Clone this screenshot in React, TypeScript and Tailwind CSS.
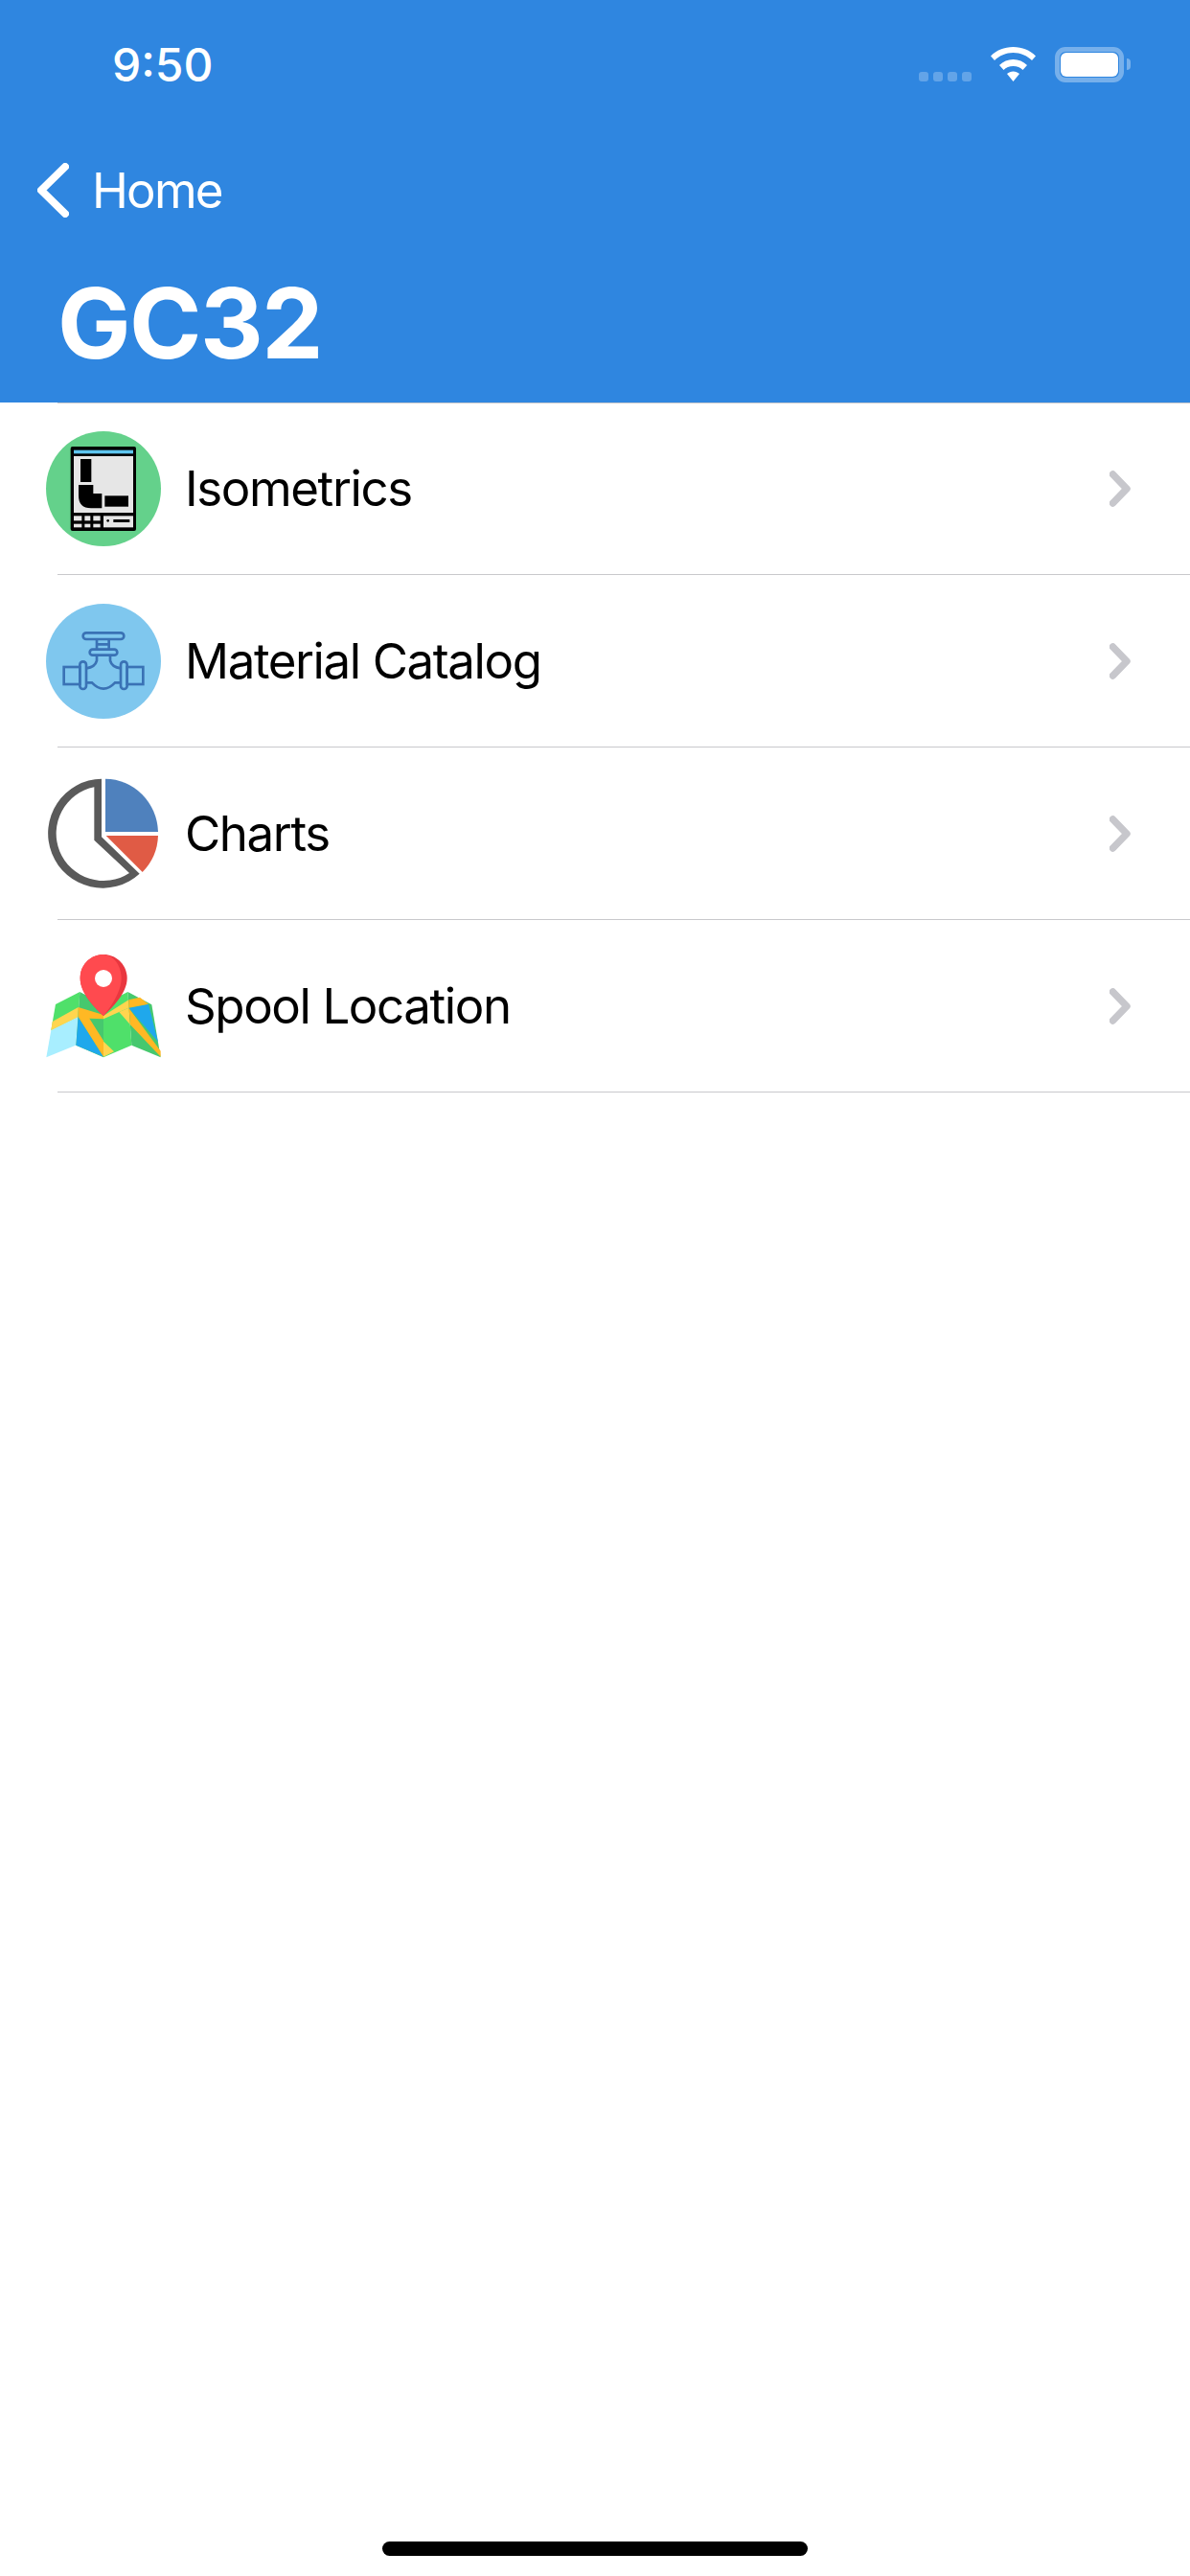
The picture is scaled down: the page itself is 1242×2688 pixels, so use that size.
import React from "react";

const font = "[font-family:Inter,'Liberation_Sans',sans-serif]";

function IsoIcon() {
  return (
    <svg width={130} height={130} viewBox="39 45 390 390">
      <circle cx={234} cy={240} r={180} fill="#64d18b" />
      <rect x={131} y={108} width={205} height={264} rx={6} fill="#000" />
      <rect x={141} y={119} width={186} height={11} fill="#5ec5ef" />
      <rect x={141} y={138} width={186} height={177} fill="#e6e6e6" />
      <rect x={162} y={147} width={34} height={72} fill="#000" />
      <path d="M156 228H202V255H229V301H195Q156 301 156 262Z" fill="#000" />
      <rect x={238} y={262} width={74} height={34} fill="#000" />
      <rect x={141} y={325} width={25} height={15} fill="#e6e6e6" />
      <rect x={175} y={325} width={18} height={15} fill="#e6e6e6" />
      <rect x={202} y={325} width={22} height={15} fill="#e6e6e6" />
      <rect x={141} y={350} width={25} height={11} fill="#e6e6e6" />
      <rect x={175} y={350} width={18} height={11} fill="#e6e6e6" />
      <rect x={202} y={350} width={22} height={11} fill="#e6e6e6" />
      <rect x={234} y={325} width={93} height={36} fill="#e6e6e6" />
      <circle cx={248} cy={340} r={4} fill="#000" />
      <rect x={265} y={336} width={51} height={9} fill="#000" />
    </svg>
  );
}

function ValveIcon() {
  return (
    <svg width={130} height={130} viewBox="39 45 390 390">
      <circle cx={234} cy={240} r={180} fill="#7fc7ee" />
      <g fill="none" stroke="#3a72b5" strokeWidth={8}>
        <rect x={170} y={151} width={128} height={20} rx={10} />
        <rect x={191} y={203} width={86} height={18} rx={9} />
        <path d="M213 171V203M251 171V203M213 187H251" />
        <rect x={110} y={258} width={50} height={54} />
        <rect x={308} y={258} width={50} height={54} />
        <rect x={160} y={241} width={20} height={86} rx={10} />
        <rect x={288} y={241} width={20} height={86} rx={10} />
        <path d="M213 221V238Q208 258 180 262M255 221V238Q260 258 288 262M180 307H198Q234 345 270 307H288" />
      </g>
    </svg>
  );
}

function PieIcon() {
  return (
    <svg width={130} height={130} viewBox="39 45 390 390">
      <path
        fillRule="evenodd"
        fill="#5a5a5a"
        d="M228 68V250L347 365A171 171 0 1 1 228 68ZM205 94V260L315 363A148 148 0 1 1 205 94Z"
      />
      <path d="M240 68A166 171 0 0 1 405 234H240Z" fill="#4f81bd" />
      <path d="M242 246H405A171 171 0 0 1 356 360Z" fill="#e05b45" />
    </svg>
  );
}

function MapIcon() {
  return (
    <svg width={130} height={130} viewBox="39 15 390 390">
      <polygon points="84,204 160,165 155,243 70,285" fill="#4fe06a" />
      <polygon points="70,285 155,243 147,332 55,370" fill="#a8eeff" />
      <polygon points="74,258 155,213 155,243 70,285" fill="#ffd54f" />
      <polygon points="160,165 234,205 234,370 148,332" fill="#46c86e" />
      <polygon points="155,243 234,368 148,332" fill="#1fa8ec" />
      <polygon points="155,213 234,237 234,250 190,248 234,318 234,368 155,243" fill="#ffb824" />
      <polygon points="234,205 310,165 322,332 234,370" fill="#4fe06a" />
      <polygon points="234,240 313,190 313,215 283,228 234,250" fill="#ffd54f" />
      <polygon points="234,320 267,352 234,368" fill="#ffd54f" />
      <polygon points="283,228 313,215 318,222 318,268" fill="#ffd54f" />
      <polygon points="310,165 385,205 413,370 322,332" fill="#46c86e" />
      <polygon points="313,215 375,203 405,322" fill="#1fa8ec" />
      <polygon points="313,190 348,182 375,203 313,215" fill="#ffb824" />
      <polygon points="313,215 413,350 413,368 318,268 316,240" fill="#ffb824" />
      <path d="M234 48C275 48 308 81 308 122C308 170 260 215 234 240C208 215 161 170 161 122C161 81 193 48 234 48Z" fill="#e9373f" />
      <path d="M234 240C208 215 161 170 161 122C161 81 193 48 234 48C268 50 290 85 290 122C290 165 255 215 234 240Z" fill="#ff4a4f" />
      <circle cx={234} cy={123} r={27} fill="#fff" />
    </svg>
  );
}

const rows = [
  { label: "Isometrics", icon: <IsoIcon /> },
  { label: "Material Catalog", icon: <ValveIcon /> },
  { label: "Charts", icon: <PieIcon /> },
  { label: "Spool Location", icon: <MapIcon /> },
];

export default function App() {
  return (
    <div className={`relative h-[2688px] w-[1242px] bg-white ${font}`}>
      <div className="h-[420px] bg-[#2f86e0] text-white">
        <div className="flex h-[134px] items-center justify-between pl-[117px] pr-[62px]">
          <div className="mt-[2px] text-[48px] font-medium leading-none">9:50</div>
          <div className="flex items-center">
            <div className="mt-[26px] flex gap-[5px]">
              <div className="h-[10px] w-[10px] rounded-[3px] bg-white/25" />
              <div className="h-[10px] w-[10px] rounded-[3px] bg-white/25" />
              <div className="h-[10px] w-[10px] rounded-[3px] bg-white/25" />
              <div className="h-[10px] w-[10px] rounded-[3px] bg-white/25" />
            </div>
            <svg className="ml-[20px]" width={47} height={36} viewBox="0 0 47 36">
              <path
                fill="#fff"
                d="M0 9.500C6 3.500 14 0 23.500 0S41 3.500 47 9.500L43 14C38 9 31 6 23.500 6S9 9 4 14ZM9 19C13 15 18 13 23.500 13S34 15 38 19L33.500 24C31 21.500 27.500 20 23.500 20S16 21.500 13.500 24ZM17 28C19 26.500 21 25.500 23.500 25.500S28 26.500 30 28L23.500 36Z"
              />
            </svg>
            <div className="ml-[20px] flex items-center">
              <div className="flex h-[37px] w-[72px] items-center justify-center rounded-[11px] border-[5px] border-white/35">
                <div className="h-[25px] w-[60px] rounded-[6px] bg-white" />
              </div>
              <div className="ml-[3px] h-[12px] w-[4px] rounded-r-full bg-white/35" />
            </div>
          </div>
        </div>
        <div className="mt-[32px] flex h-[64px] items-center pl-[39px]">
          <svg width={33} height={57} viewBox="0 0 33 57" fill="none">
            <path d="M29 4L4 28.500L29 53" stroke="#fff" strokeWidth={8} strokeLinecap="round" strokeLinejoin="round" />
          </svg>
          <span className="ml-[24px] text-[51px] leading-none tracking-[-1.800px]">Home</span>
        </div>
        <div className="mt-[57px] pl-[60px] text-[102px] font-bold leading-[100px] tracking-[-1.500px]">GC32</div>
      </div>
      <div className="relative -mb-px ml-[60px] h-px bg-[#c9c9cc]" />
      {rows.map((row) => (
        <div key={row.label} className="relative flex h-[180px] items-center pb-px pl-[43px]">
          {row.icon}
          <span className="ml-[20px] text-[51px] leading-none tracking-[-1.400px] text-black">{row.label}</span>
          <svg className="ml-auto mr-[62px]" width={22} height={38} viewBox="0 0 22 38" fill="none">
            <path d="M3.500 4L18 19L3.500 34" stroke="#c7c7cc" strokeWidth={7.500} strokeLinecap="round" strokeLinejoin="round" />
          </svg>
          <div className="absolute bottom-0 left-[60px] right-0 h-px bg-[#c9c9cc]" />
        </div>
      ))}
      <div className="absolute bottom-[21px] left-[399px] h-[15px] w-[444px] rounded-full bg-black" />
    </div>
  );
}
